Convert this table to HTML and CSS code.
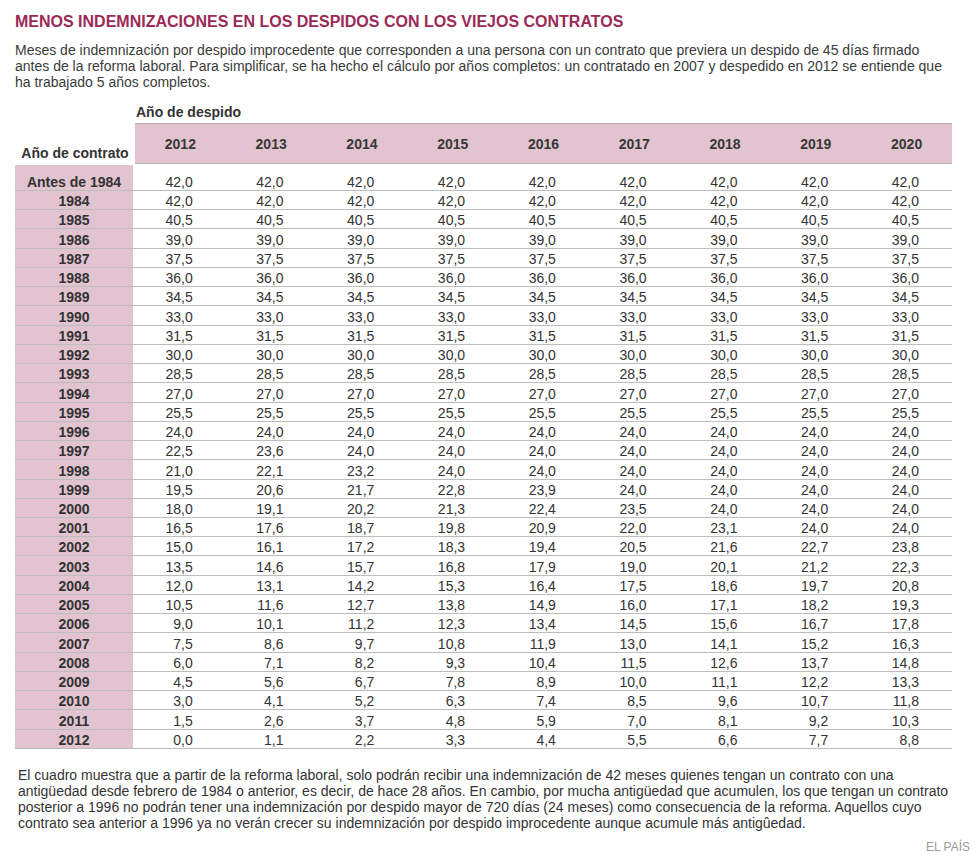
FILE: index.html
```html
<!DOCTYPE html>
<html lang="es">
<head>
<meta charset="utf-8">
<title>Menos indemnizaciones en los despidos con los viejos contratos</title>
<link rel="stylesheet" href="styles.css">
</head>
<body>
<div class="page">
  <h1 class="title">MENOS INDEMNIZACIONES EN LOS DESPIDOS CON LOS VIEJOS CONTRATOS</h1>
  <p class="lead">Meses de indemnización por despido improcedente que corresponden a una persona con un contrato que previera un despido de 45 días firmado antes de la reforma laboral. Para simplificar, se ha hecho el cálculo por años completos: un contratado en 2007 y despedido en 2012 se entiende que ha trabajado 5 años completos.</p>

  <div class="chart">
    <div class="axis-row"><span class="axis-x">Año de despido</span></div>
    <div class="head-row">
      <div class="axis-y">Año de contrato</div>
      <div class="years">
        <span>2012</span><span>2013</span><span>2014</span><span>2015</span><span>2016</span><span>2017</span><span>2018</span><span>2019</span><span>2020</span>
      </div>
    </div>
    <div class="rows">
      <div class="row first"><div class="label">Antes de 1984</div><span>42,0</span><span>42,0</span><span>42,0</span><span>42,0</span><span>42,0</span><span>42,0</span><span>42,0</span><span>42,0</span><span>42,0</span></div>
      <div class="row"><div class="label">1984</div><span>42,0</span><span>42,0</span><span>42,0</span><span>42,0</span><span>42,0</span><span>42,0</span><span>42,0</span><span>42,0</span><span>42,0</span></div>
      <div class="row"><div class="label">1985</div><span>40,5</span><span>40,5</span><span>40,5</span><span>40,5</span><span>40,5</span><span>40,5</span><span>40,5</span><span>40,5</span><span>40,5</span></div>
      <div class="row"><div class="label">1986</div><span>39,0</span><span>39,0</span><span>39,0</span><span>39,0</span><span>39,0</span><span>39,0</span><span>39,0</span><span>39,0</span><span>39,0</span></div>
      <div class="row"><div class="label">1987</div><span>37,5</span><span>37,5</span><span>37,5</span><span>37,5</span><span>37,5</span><span>37,5</span><span>37,5</span><span>37,5</span><span>37,5</span></div>
      <div class="row"><div class="label">1988</div><span>36,0</span><span>36,0</span><span>36,0</span><span>36,0</span><span>36,0</span><span>36,0</span><span>36,0</span><span>36,0</span><span>36,0</span></div>
      <div class="row"><div class="label">1989</div><span>34,5</span><span>34,5</span><span>34,5</span><span>34,5</span><span>34,5</span><span>34,5</span><span>34,5</span><span>34,5</span><span>34,5</span></div>
      <div class="row"><div class="label">1990</div><span>33,0</span><span>33,0</span><span>33,0</span><span>33,0</span><span>33,0</span><span>33,0</span><span>33,0</span><span>33,0</span><span>33,0</span></div>
      <div class="row"><div class="label">1991</div><span>31,5</span><span>31,5</span><span>31,5</span><span>31,5</span><span>31,5</span><span>31,5</span><span>31,5</span><span>31,5</span><span>31,5</span></div>
      <div class="row"><div class="label">1992</div><span>30,0</span><span>30,0</span><span>30,0</span><span>30,0</span><span>30,0</span><span>30,0</span><span>30,0</span><span>30,0</span><span>30,0</span></div>
      <div class="row"><div class="label">1993</div><span>28,5</span><span>28,5</span><span>28,5</span><span>28,5</span><span>28,5</span><span>28,5</span><span>28,5</span><span>28,5</span><span>28,5</span></div>
      <div class="row"><div class="label">1994</div><span>27,0</span><span>27,0</span><span>27,0</span><span>27,0</span><span>27,0</span><span>27,0</span><span>27,0</span><span>27,0</span><span>27,0</span></div>
      <div class="row"><div class="label">1995</div><span>25,5</span><span>25,5</span><span>25,5</span><span>25,5</span><span>25,5</span><span>25,5</span><span>25,5</span><span>25,5</span><span>25,5</span></div>
      <div class="row"><div class="label">1996</div><span>24,0</span><span>24,0</span><span>24,0</span><span>24,0</span><span>24,0</span><span>24,0</span><span>24,0</span><span>24,0</span><span>24,0</span></div>
      <div class="row"><div class="label">1997</div><span>22,5</span><span>23,6</span><span>24,0</span><span>24,0</span><span>24,0</span><span>24,0</span><span>24,0</span><span>24,0</span><span>24,0</span></div>
      <div class="row"><div class="label">1998</div><span>21,0</span><span>22,1</span><span>23,2</span><span>24,0</span><span>24,0</span><span>24,0</span><span>24,0</span><span>24,0</span><span>24,0</span></div>
      <div class="row"><div class="label">1999</div><span>19,5</span><span>20,6</span><span>21,7</span><span>22,8</span><span>23,9</span><span>24,0</span><span>24,0</span><span>24,0</span><span>24,0</span></div>
      <div class="row"><div class="label">2000</div><span>18,0</span><span>19,1</span><span>20,2</span><span>21,3</span><span>22,4</span><span>23,5</span><span>24,0</span><span>24,0</span><span>24,0</span></div>
      <div class="row"><div class="label">2001</div><span>16,5</span><span>17,6</span><span>18,7</span><span>19,8</span><span>20,9</span><span>22,0</span><span>23,1</span><span>24,0</span><span>24,0</span></div>
      <div class="row"><div class="label">2002</div><span>15,0</span><span>16,1</span><span>17,2</span><span>18,3</span><span>19,4</span><span>20,5</span><span>21,6</span><span>22,7</span><span>23,8</span></div>
      <div class="row"><div class="label">2003</div><span>13,5</span><span>14,6</span><span>15,7</span><span>16,8</span><span>17,9</span><span>19,0</span><span>20,1</span><span>21,2</span><span>22,3</span></div>
      <div class="row"><div class="label">2004</div><span>12,0</span><span>13,1</span><span>14,2</span><span>15,3</span><span>16,4</span><span>17,5</span><span>18,6</span><span>19,7</span><span>20,8</span></div>
      <div class="row"><div class="label">2005</div><span>10,5</span><span>11,6</span><span>12,7</span><span>13,8</span><span>14,9</span><span>16,0</span><span>17,1</span><span>18,2</span><span>19,3</span></div>
      <div class="row"><div class="label">2006</div><span>9,0</span><span>10,1</span><span>11,2</span><span>12,3</span><span>13,4</span><span>14,5</span><span>15,6</span><span>16,7</span><span>17,8</span></div>
      <div class="row"><div class="label">2007</div><span>7,5</span><span>8,6</span><span>9,7</span><span>10,8</span><span>11,9</span><span>13,0</span><span>14,1</span><span>15,2</span><span>16,3</span></div>
      <div class="row"><div class="label">2008</div><span>6,0</span><span>7,1</span><span>8,2</span><span>9,3</span><span>10,4</span><span>11,5</span><span>12,6</span><span>13,7</span><span>14,8</span></div>
      <div class="row"><div class="label">2009</div><span>4,5</span><span>5,6</span><span>6,7</span><span>7,8</span><span>8,9</span><span>10,0</span><span>11,1</span><span>12,2</span><span>13,3</span></div>
      <div class="row"><div class="label">2010</div><span>3,0</span><span>4,1</span><span>5,2</span><span>6,3</span><span>7,4</span><span>8,5</span><span>9,6</span><span>10,7</span><span>11,8</span></div>
      <div class="row"><div class="label">2011</div><span>1,5</span><span>2,6</span><span>3,7</span><span>4,8</span><span>5,9</span><span>7,0</span><span>8,1</span><span>9,2</span><span>10,3</span></div>
      <div class="row"><div class="label">2012</div><span>0,0</span><span>1,1</span><span>2,2</span><span>3,3</span><span>4,4</span><span>5,5</span><span>6,6</span><span>7,7</span><span>8,8</span></div>
    </div>
  </div>

  <p class="note">El cuadro muestra que a partir de la reforma laboral, solo podrán recibir una indemnización de 42 meses quienes tengan un contrato con una antigüedad desde febrero de 1984 o anterior, es decir, de hace 28 años. En cambio, por mucha antigüedad que acumulen, los que tengan un contrato posterior a 1996 no podrán tener una indemnización por despido mayor de 720 días (24 meses) como consecuencia de la reforma. Aquellos cuyo contrato sea anterior a 1996 ya no verán crecer su indemnización por despido improcedente aunque acumule más antigûedad.</p>
  <div class="credit">EL PAÍS</div>
</div>
</body>
</html>
```

FILE: styles.css
```css
html, body {
  margin: 0;
  padding: 0;
  background: #ffffff;
}

body {
  font-family: "Liberation Sans", Arial, Helvetica, sans-serif;
  color: #333333;
}

.page {
  padding: 12px 10px 0 15px;
}

.title {
  margin: 0;
  font-size: 16px;
  line-height: 20px;
  font-weight: bold;
  color: #9b2a57;
}

.lead {
  margin: 10px 0 0;
  width: 937px;
  font-size: 14px;
  line-height: 16px;
  color: #3a3a3a;
}

.chart {
  width: 937px;
  margin-top: 14px;
}

.axis-row {
  display: grid;
  grid-template-columns: 120px 1fr;
  height: 19px;
}

.axis-x {
  grid-column: 2;
  padding-left: 1px;
  font-size: 14px;
  line-height: 16px;
  font-weight: bold;
  color: #333333;
}

.head-row {
  display: grid;
  grid-template-columns: 120px 1fr;
  height: 41px;
}

.axis-y {
  align-self: end;
  padding-bottom: 3px;
  text-align: center;
  font-size: 14px;
  line-height: 16px;
  font-weight: bold;
  color: #333333;
}

.years {
  display: grid;
  grid-template-columns: repeat(9, 1fr);
  align-items: center;
  background: #e2c3d0;
  border-top: 1px solid #b9a6ae;
  border-bottom: 1px solid #b3b3b3;
}

.years span {
  text-align: center;
  font-size: 14px;
  line-height: 16px;
  font-weight: bold;
  color: #383838;
}

.row {
  display: grid;
  grid-template-columns: 120px repeat(9, 1fr);
  height: 19.24px;
  box-sizing: border-box;
  border-bottom: 1px solid #bdbdbd;
  font-size: 14px;
  line-height: 16px;
}

.row.first {
  height: 27px;
}

.row.first .label {
  margin-top: 1px;
}

.label {
  display: flex;
  align-items: flex-end;
  justify-content: center;
  margin-right: 2px;
  background: #e2c3d0;
  font-weight: bold;
  color: #333333;
}

.row span {
  display: flex;
  align-items: flex-end;
  justify-content: flex-end;
  padding-right: 33px;
  color: #333333;
}

.note {
  margin: 18px 0 0 3px;
  width: 932px;
  font-size: 14px;
  line-height: 16px;
  color: #333333;
}

.credit {
  display: flex;
  justify-content: flex-end;
  width: 955px;
  margin-top: 9px;
  font-size: 12px;
  line-height: 14px;
  color: #9a9a9a;
}
```
